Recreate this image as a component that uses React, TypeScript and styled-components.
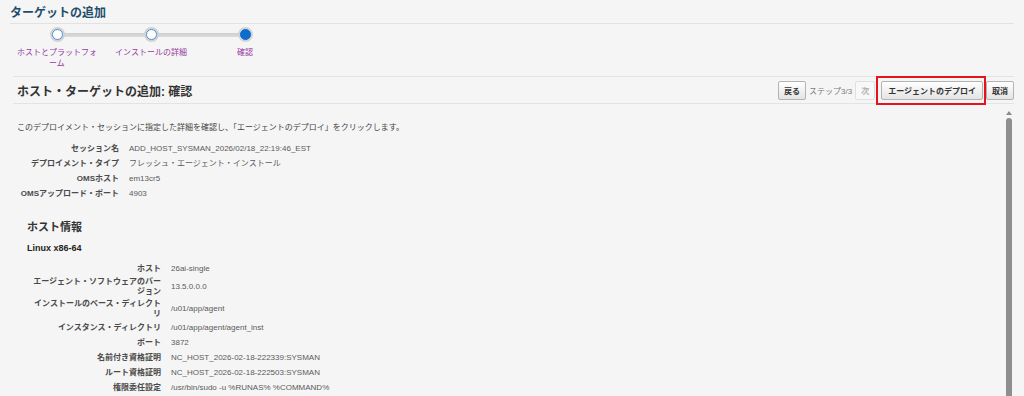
import React from 'react';
import styled, { createGlobalStyle } from 'styled-components';

const GlobalStyle = createGlobalStyle`
    html, body {
        margin: 0;
        padding: 0;
        background: #f5f5f5;
    }
    body {
        font-family: "Liberation Sans", "Noto Sans CJK JP", sans-serif;
        color: #333;
    }
`

const Page = styled.div`
    height: 396px;
    overflow: hidden;
    padding: 5px 10px 0 10px;
    box-sizing: border-box;
    display: flex;
    flex-direction: column;
`

const Title = styled.h1`
    margin: 0;
    padding-bottom: 1px;
    font-size: 12px;
    line-height: 17px;
    font-weight: bold;
    color: #1f4e6d;
    border-bottom: 1px solid #e2e2e2;
`

const Train = styled.div`
    display: grid;
    grid-template-columns: repeat(3, 94px);
    padding-top: 4px;
    height: 48px;
`

const Stop = styled.div<{ first?: boolean, last?: boolean }>`
    position: relative;
    display: flex;
    flex-direction: column;
    align-items: center;

    &::before {
        content: '';
        position: absolute;
        top: 5px;
        left: ${p => p.first ? '50%' : '0'};
        right: ${p => p.last ? '50%' : '0'};
        height: 4px;
        background: linear-gradient(#cfcfcf, #dcdcdc);
    }
`

const Dot = styled.span<{ current?: boolean }>`
    position: relative;
    width: 9px;
    height: 9px;
    margin-top: 1px;
    border-radius: 50%;
    border: 1px solid ${p => p.current ? '#0b6dcc' : '#4c93d8'};
    background: ${p => p.current ? '#0b6dcc' : '#fff'};
    box-shadow: 0 0 0 2px #d2d2d2;
`

const StopLabel = styled.span`
    margin-top: 7px;
    padding: 0 4px;
    font-size: 8px;
    line-height: 11px;
    color: #963a9f;
    text-align: center;
    line-break: loose;
`

const Section = styled.div`
    margin-left: 3px;
    border-top: 1px solid #dfe4e9;
    display: flex;
    flex-direction: column;
    flex: 1;
    min-height: 0;
`

const HeaderRow = styled.div`
    display: flex;
    align-items: center;
    height: 26px;
    border-bottom: 1px solid #dfe4e9;
`

const Heading = styled.h2`
    margin: 0 0 0 4px;
    flex: 1;
    font-size: 12px;
    font-weight: bold;
    color: #333;
`

const Actions = styled.div`
    display: flex;
    align-items: center;
`

const Btn = styled.button<{ disabled?: boolean, highlight?: boolean, gap?: number, pad?: number }>`
    position: relative;
    height: 19px;
    margin-left: ${p => p.gap ?? 0}px;
    padding: 0 ${p => p.pad ?? 5}px;
    font-family: inherit;
    font-size: 8px;
    font-weight: bold;
    color: ${p => p.disabled ? '#b0b0b0' : '#333'};
    border: 1px solid ${p => p.disabled ? '#e0e0e0' : '#b3b3b3'};
    border-radius: 2px;
    background: ${p => p.disabled ? '#f8f8f8' : 'linear-gradient(#ffffff, #e4e4e4)'};

    &::after {
        content: '';
        display: ${p => p.highlight ? 'block' : 'none'};
        position: absolute;
        inset: -6px -4px -6px -6px;
        border: 2px solid #e5141c;
        pointer-events: none;
    }
`

const StepText = styled.span`
    margin-left: 3px;
    font-size: 8px;
    color: #7a7a7a;
`

const Body = styled.div`
    display: flex;
    flex: 1;
    min-height: 0;
`

const Main = styled.div`
    flex: 1;
    padding: 19px 0 0 4px;
`

const Intro = styled.p`
    margin: 0 0 8px 0;
    font-size: 8px;
    line-height: 10px;
    color: #444;
`

const InfoGrid = styled.div<{ labelWidth: number, indent?: number }>`
    display: grid;
    grid-template-columns: ${p => p.labelWidth}px 1fr;
    column-gap: 10px;
    margin-left: ${p => p.indent ?? 0}px;
    grid-auto-rows: minmax(15px, auto);
    align-items: center;
`

const Label = styled.div`
    font-size: 8px;
    line-height: 10px;
    font-weight: bold;
    color: #4a4a4a;
    text-align: right;
    padding: 1px 0;
`

const Value = styled.div`
    font-size: 8px;
    line-height: 10px;
    color: #5a5a5a;
`

const SubHeading = styled.h3`
    margin: 19px 0 0 10px;
    font-size: 11px;
    line-height: 14px;
    font-weight: bold;
    color: #333;
`

const Platform = styled.h4`
    margin: 9px 0 7px 10px;
    font-size: 9px;
    line-height: 11px;
    font-weight: bold;
    color: #222;
`

const Scrollbar = styled.div`
    width: 8px;
    margin-right: 1px;
    display: flex;
    flex-direction: column;
    align-items: center;
    padding-top: 7px;
`

const ScrollArrow = styled.span`
    width: 0;
    height: 0;
    border-left: 3px solid transparent;
    border-right: 3px solid transparent;
    border-bottom: 4px solid #8a8a8a;
`

const Thumb = styled.span`
    flex: 1;
    width: 6px;
    margin-top: 3px;
    border-radius: 3px 3px 0 0;
    background: #8e8e8e;
`

const sessionRows: [string, string][] = [
    ['セッション名', 'ADD_HOST_SYSMAN_2026/02/18_22:19:46_EST'],
    ['デプロイメント・タイプ', 'フレッシュ・エージェント・インストール'],
    ['OMSホスト', 'em13cr5'],
    ['OMSアップロード・ポート', '4903'],
]

const hostRows: [string, string][] = [
    ['ホスト', '26ai-single'],
    ['エージェント・ソフトウェアのバージョン', '13.5.0.0.0'],
    ['インストールのベース・ディレクトリ', '/u01/app/agent'],
    ['インスタンス・ディレクトリ', '/u01/app/agent/agent_inst'],
    ['ポート', '3872'],
    ['名前付き資格証明', 'NC_HOST_2026-02-18-222339:SYSMAN'],
    ['ルート資格証明', 'NC_HOST_2026-02-18-222503:SYSMAN'],
    ['権限委任設定', '/usr/bin/sudo -u %RUNAS% %COMMAND%'],
]

const steps = ['ホストとプラットフォーム', 'インストールの詳細', '確認']

export default function App() {
    return (
        <>
            <GlobalStyle />
            <Page>
                <Title>ターゲットの追加</Title>
                <Train>
                    {steps.map((s, i) => (
                        <Stop key={s} first={i === 0} last={i === steps.length - 1}>
                            <Dot current={i === steps.length - 1} />
                            <StopLabel>{s}</StopLabel>
                        </Stop>
                    ))}
                </Train>
                <Section>
                    <HeaderRow>
                        <Heading>ホスト・ターゲットの追加: 確認</Heading>
                        <Actions>
                            <Btn pad={5}>戻る</Btn>
                            <StepText>ステップ3/3</StepText>
                            <Btn disabled gap={3} pad={5}>次</Btn>
                            <Btn highlight gap={6} pad={6}>エージェントのデプロイ</Btn>
                            <Btn gap={3}>取消</Btn>
                        </Actions>
                    </HeaderRow>
                    <Body>
                        <Main>
                            <Intro>このデプロイメント・セッションに指定した詳細を確認し、「エージェントのデプロイ」をクリックします。</Intro>
                            <InfoGrid labelWidth={102}>
                                {sessionRows.map(([k, v]) => (
                                    <React.Fragment key={k}>
                                        <Label>{k}</Label>
                                        <Value>{v}</Value>
                                    </React.Fragment>
                                ))}
                            </InfoGrid>
                            <SubHeading>ホスト情報</SubHeading>
                            <Platform>Linux x86-64</Platform>
                            <InfoGrid labelWidth={132} indent={12}>
                                {hostRows.map(([k, v]) => (
                                    <React.Fragment key={k}>
                                        <Label>{k}</Label>
                                        <Value>{v}</Value>
                                    </React.Fragment>
                                ))}
                            </InfoGrid>
                        </Main>
                        <Scrollbar>
                            <ScrollArrow />
                            <Thumb />
                        </Scrollbar>
                    </Body>
                </Section>
            </Page>
        </>
    )
}
